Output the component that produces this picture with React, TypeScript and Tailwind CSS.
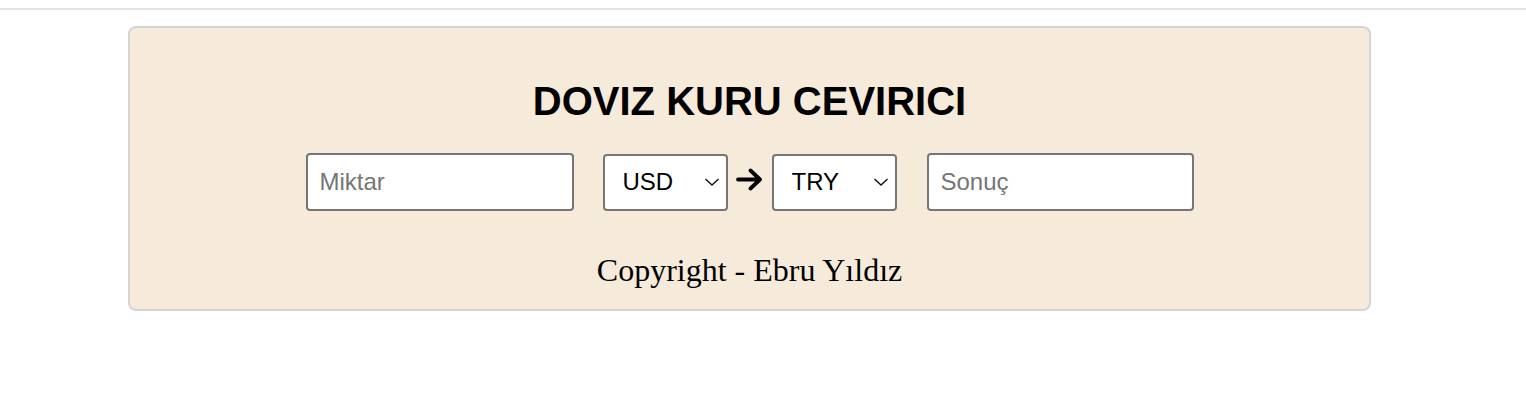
import { useState } from 'react';

const currencies = ['USD', 'EUR', 'GBP', 'TRY'];

function Chevron() {
  return (
    <svg
      className="pointer-events-none absolute right-[8px] top-1/2 -translate-y-1/2"
      width="16"
      height="9"
      viewBox="0 0 16 9"
      fill="none"
    >
      <path d="M1.5 1.5 L8 7.5 L14.5 1.5" stroke="#111" strokeWidth="1.4" />
    </svg>
  );
}

function CurrencySelect({ value, onChange }: { value: string; onChange: (v: string) => void }) {
  return (
    <div className="relative w-[125px] h-[57px]">
      <select
        value={value}
        onChange={(e) => onChange(e.target.value)}
        className="appearance-none w-full h-full bg-white border-2 border-[#767676] rounded-[4px] pl-[18px] text-[24px] text-black outline-none font-['Liberation_Sans',Arial,sans-serif]"
      >
        {currencies.map((c) => (
          <option key={c} value={c}>
            {c}
          </option>
        ))}
      </select>
      <Chevron />
    </div>
  );
}

export default function App() {
  const [amount, setAmount] = useState('');
  const [from, setFrom] = useState('USD');
  const [to, setTo] = useState('TRY');

  return (
    <div className="min-h-screen bg-white pt-[8px] font-['Liberation_Sans',Arial,sans-serif]">
      {/* Top rule */}
      <div className="h-[2px] bg-[#e4e4e4]" />

      {/* Converter card */}
      <div className="mt-[16px] ml-[128px] w-[1243px] bg-[#f6ebdb] border-2 border-[#d4d4d4] rounded-[8px] pt-[50px] pb-[20px] text-center">
        <h1 className="text-[40px] leading-[46px] font-bold text-black">DOVIZ KURU CEVIRICI</h1>

        <div className="mt-[29px] flex items-center justify-center">
          <input
            value={amount}
            onChange={(e) => setAmount(e.target.value)}
            placeholder="Miktar"
            className="w-[268px] h-[58px] bg-white border-2 border-[#767676] rounded-[4px] px-[12px] text-[24px] text-black placeholder:text-[#757575] outline-none"
          />
          <div className="ml-[29px]">
            <CurrencySelect value={from} onChange={setFrom} />
          </div>
          <svg className="ml-[8px] mt-[-6px]" width="27" height="23" viewBox="0 0 27 23" fill="none">
            <path
              d="M2 11.5 H24 M14.5 2.5 L24 11.5 L14.5 20.5"
              stroke="#000"
              strokeWidth="3.8"
              strokeLinecap="round"
              strokeLinejoin="round"
            />
          </svg>
          <div className="ml-[9px]">
            <CurrencySelect value={to} onChange={setTo} />
          </div>
          <input
            readOnly
            placeholder="Sonuç"
            className="ml-[30px] w-[267px] h-[58px] bg-white border-2 border-[#767676] rounded-[4px] px-[12px] text-[24px] text-black placeholder:text-[#757575] outline-none"
          />
        </div>

        <p className="mt-[41px] text-[32px] leading-[37px] text-black font-['Liberation_Serif','Times_New_Roman',serif]">
          Copyright - Ebru Yıldız
        </p>
      </div>
    </div>
  );
}
